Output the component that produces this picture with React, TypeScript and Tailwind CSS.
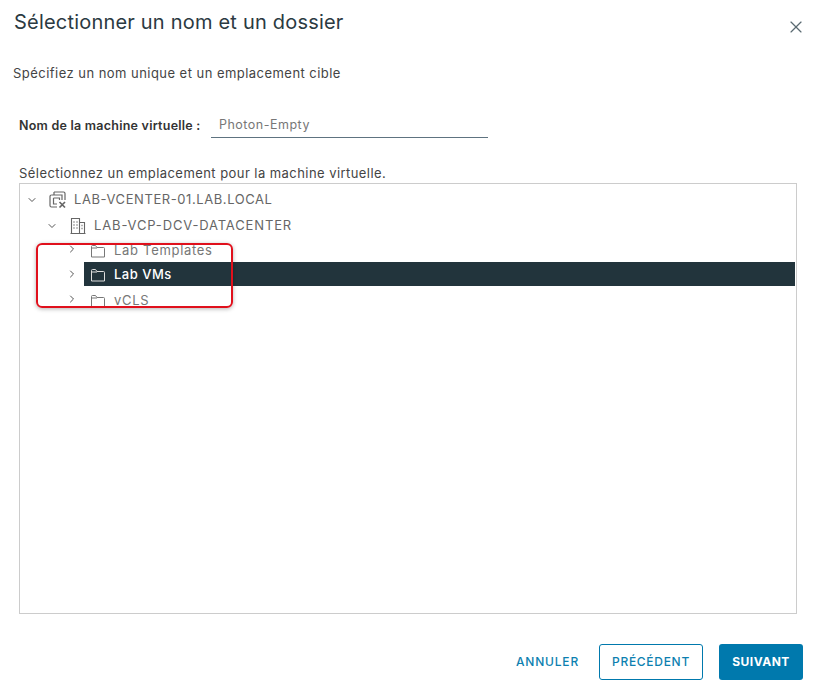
import React from 'react';
import { X, ChevronDown, ChevronRight } from 'lucide-react';

const FolderIcon = ({ className }: { className: string }) => (
  <svg className={className} width="16" height="16" viewBox="0 0 16 16" fill="none" stroke="currentColor" strokeWidth="1">
    <path d="M1.5 14V3.5a1 1 0 0 1 1-1h3l1.5 2h6.5a1 1 0 0 1 1 1V14z" strokeLinejoin="round" />
    <path d="M1.5 5h5.5" />
  </svg>
);

const VCenterIcon = () => (
  <svg className="text-[#666]" width="18" height="18" viewBox="0 0 18 18" fill="none" stroke="currentColor" strokeWidth="1.2">
    <path d="M5 1h9.5a1.5 1.5 0 0 1 1.5 1.5V9" />
    <path d="M2.5 4h10.5v5" />
    <path d="M2.5 4a1.5 1.5 0 0 0-1.5 1.5v9A1.5 1.5 0 0 0 2.5 16H8" />
    <path d="M5 1v3M4.5 7h6v2M4.5 7v6h3.5" />
    <path d="M10.5 11l5.5 5.5M16 11l-5.5 5.5" strokeWidth="1.7" />
  </svg>
);

const DatacenterIcon = () => (
  <svg className="text-[#666]" width="16" height="18" viewBox="0 0 16 18" fill="none" stroke="currentColor" strokeWidth="1.1">
    <path d="M1.5 16.5V1.5h8v15zM9.5 5.5h5v11h-5zM0.5 16.5h15" />
    <path d="M3.5 5h1M6.5 5h1M3.5 8h1M6.5 8h1M3.5 11h1M6.5 11h1M11.5 8.5h1M11.5 11.5h1" strokeWidth="1.5" />
  </svg>
);

const folders = ['Lab Templates', 'Lab VMs', 'vCLS'];

export default function App() {
  return (
    <div className="relative w-[819px] h-[693px] bg-white overflow-hidden font-['Inter','Liberation_Sans',sans-serif]">
      <div className="flex items-start justify-between pl-[14px] pr-[13px] pt-[10px]">
        <h1 className="text-[20px] leading-6 tracking-[0.2px] text-[#2b3a42] font-normal">Sélectionner un nom et un dossier</h1>
        <button className="mt-[7px] text-[#5a6a72]">
          <X size={20} strokeWidth={1.4} />
        </button>
      </div>

      <p className="pl-[13px] mt-[26px] text-[13px] leading-5 tracking-[0.46px] text-[#444]">Spécifiez un nom unique et un emplacement cible</p>

      <div className="flex items-center mt-[31px] pl-[19px]">
        <label className="w-[192px] text-[12.5px] font-semibold leading-5 tracking-[0.24px] text-[#333]">Nom de la machine virtuelle :</label>
        <div className="w-[277px] h-[24px] pl-2 border-b border-[#5e7380] text-[12.5px] leading-[22px] tracking-[0.5px] text-[#777]">Photon-Empty</div>
      </div>

      <p className="pl-[19px] mt-[26px] text-[13px] leading-[18px] tracking-[0.44px] text-[#444]">Sélectionnez un emplacement pour la machine virtuelle.</p>

      <div className="mx-[19px] mt-px w-[778px] h-[431px] border border-[#ccc] pt-[3px] pr-px">
        <div className="flex items-center h-[26px] pl-[6px] text-[13px] tracking-[0.58px] text-[#666]">
          <ChevronDown size={12} className="text-[#555]" />
          <span className="ml-[11px] mr-[7px] flex"><VCenterIcon /></span>
          LAB-VCENTER-01.LAB.LOCAL
        </div>
        <div className="flex items-center h-[25px] pl-[26px] text-[13px] tracking-[0.85px] text-[#666]">
          <ChevronDown size={12} className="text-[#555]" />
          <span className="ml-[12px] mr-[8px] flex"><DatacenterIcon /></span>
          LAB-VCP-DCV-DATACENTER
        </div>
        {folders.map((name) => {
          const selected = name === 'Lab VMs';
          return (
            <div key={name} className="flex items-start h-[25px] pl-[46px]">
              <ChevronRight size={12} className="text-[#555] mt-[5px]" />
              <div className={selected
                ? 'flex items-center flex-1 h-[24px] -mt-px pt-[2px] ml-[6px] pl-[6px] bg-[#22343c] text-white font-medium text-[13px] tracking-[0.5px]'
                : 'flex items-center flex-1 h-[24px] mt-px ml-[6px] pl-[6px] text-[#777] text-[13px] tracking-[0.7px]'}>
                <FolderIcon className={selected ? 'mr-[8px] text-[#ddd]' : 'mr-[8px] text-[#777]'} />
                {name}
              </div>
            </div>
          );
        })}
      </div>

      <div className="flex items-center justify-end gap-4 pr-4 mt-[30px]">
        <button className="mr-[4px] text-[12px] font-medium tracking-[0.8px] text-[#0d7fb0]">ANNULER</button>
        <button className="w-[104px] h-[36px] rounded-[3px] border border-[#0079ad] text-[12px] font-medium tracking-[0.7px] text-[#0d7fb0]">PRÉCÉDENT</button>
        <button className="w-[84px] h-[36px] rounded-[3px] bg-[#0079ad] text-[12px] font-bold tracking-[0.5px] text-white">SUIVANT</button>
      </div>

      <div className="absolute left-[36px] top-[243px] w-[197px] h-[65px] rounded-[6px] border-2 border-[#e0101c] shadow-[0_1px_4px_rgba(0,0,0,0.3)]" />
    </div>
  );
}
